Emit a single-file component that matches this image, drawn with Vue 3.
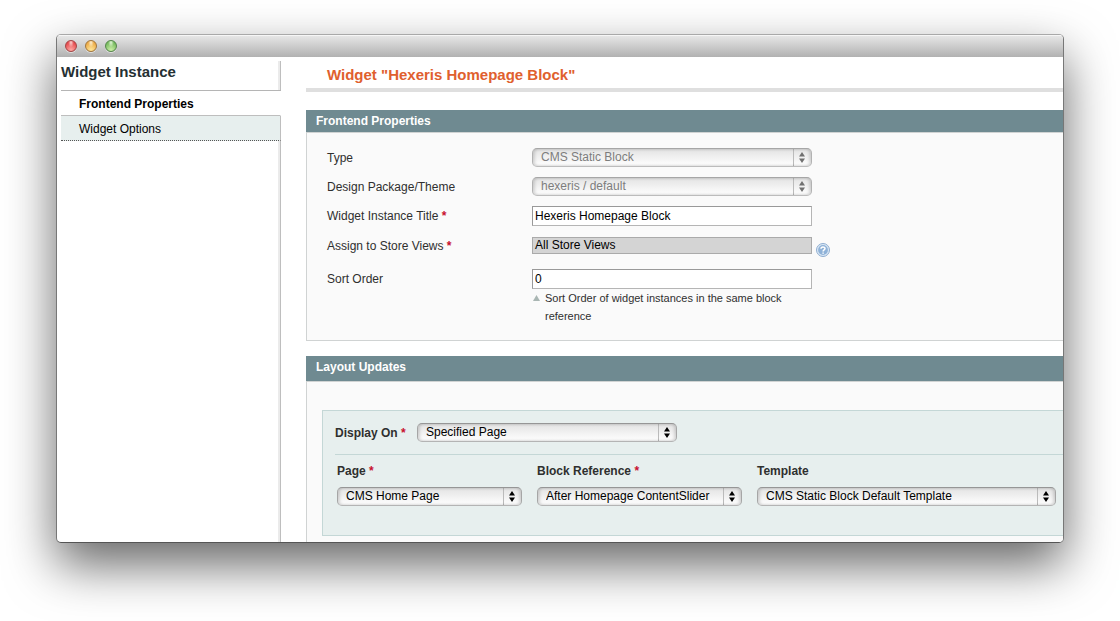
<script setup>
import { ref } from 'vue'

const type = ref('CMS Static Block')
const theme = ref('hexeris / default')
const title = ref('Hexeris Homepage Block')
const stores = ref(['All Store Views'])
const sortOrder = ref('0')
const displayOn = ref('Specified Page')

const columns = [
  { id: 'page', label: 'Page', required: true, value: 'CMS Home Page' },
  { id: 'block', label: 'Block Reference', required: true, value: 'After Homepage ContentSlider' },
  { id: 'template', label: 'Template', required: false, value: 'CMS Static Block Default Template' }
]
</script>

<template>
  <div class="desktop">
    <div class="window">
      <header class="titlebar">
        <button class="light red" type="button" aria-label="Close"></button>
        <button class="light amber" type="button" aria-label="Minimize"></button>
        <button class="light green" type="button" aria-label="Zoom"></button>
      </header>

      <div class="content">
        <aside class="sidebar">
          <h3>Widget Instance</h3>
          <nav>
            <a href="#frontend" class="tab active">Frontend Properties</a>
            <a href="#options" class="tab">Widget Options</a>
          </nav>
        </aside>

        <main class="main">
          <h1>Widget "Hexeris Homepage Block"</h1>

          <section id="frontend">
            <h2 class="head">Frontend Properties</h2>
            <div class="body fields">
              <label for="type">Type</label>
              <div class="pop disabled">
                <select id="type" v-model="type" disabled><option>CMS Static Block</option></select>
                <svg class="arrows" viewBox="0 0 6 11"><path d="M3 0 6 4.5H0zM3 11 6 6.5H0z" /></svg>
              </div>

              <label for="theme">Design Package/Theme</label>
              <div class="pop disabled">
                <select id="theme" v-model="theme" disabled><option>hexeris / default</option></select>
                <svg class="arrows" viewBox="0 0 6 11"><path d="M3 0 6 4.5H0zM3 11 6 6.5H0z" /></svg>
              </div>

              <label for="title">Widget Instance Title <em>*</em></label>
              <input id="title" v-model="title" type="text" />

              <label for="stores">Assign to Store Views <em>*</em></label>
              <div class="stores">
                <select id="stores" v-model="stores" multiple size="1"><option>All Store Views</option></select>
                <svg class="help" viewBox="0 0 14 14" role="img" aria-label="Help">
                  <circle cx="7" cy="7" r="6.5" fill="#dce9f5" stroke="#8fadd0" />
                  <circle cx="7" cy="7" r="4.9" fill="#8fb2d8" />
                  <path d="M5 5.7C5 3.3 9 3.3 9 5.6 9 7 7.1 6.9 7.1 8.4M7.1 9.4V10.7" fill="none" stroke="#fff" stroke-width="1.5" />
                </svg>
              </div>

              <label for="sort">Sort Order</label>
              <div>
                <input id="sort" v-model="sortOrder" type="text" />
                <p class="note">
                  <svg viewBox="0 0 7 6"><path d="M3.5 0 7 6H0z" /></svg>
                  <span>Sort Order of widget instances in the same block reference</span>
                </p>
              </div>
            </div>
          </section>

          <section id="layout">
            <h2 class="head tall">Layout Updates</h2>
            <div class="body updates">
              <div class="panel">
                <div class="display">
                  <label for="display">Display On <em>*</em></label>
                  <div class="pop">
                    <select id="display" v-model="displayOn"><option>Specified Page</option></select>
                    <svg class="arrows" viewBox="0 0 6 11"><path d="M3 0 6 4.5H0zM3 11 6 6.5H0z" /></svg>
                  </div>
                </div>
                <div class="columns">
                  <div v-for="c in columns" :key="c.id">
                    <label :for="c.id">{{ c.label }} <em v-if="c.required">*</em></label>
                    <div class="pop">
                      <select :id="c.id"><option>{{ c.value }}</option></select>
                      <svg class="arrows" viewBox="0 0 6 11"><path d="M3 0 6 4.5H0zM3 11 6 6.5H0z" /></svg>
                    </div>
                  </div>
                </div>
              </div>
            </div>
          </section>
        </main>
      </div>
    </div>
  </div>
</template>

<style>
body {
  background: #fff;
}
</style>

<style scoped>
* {
  box-sizing: border-box;
}
.desktop {
  padding: 34px 56px 78px;
  overflow: hidden;
  font: 12px/18px "Liberation Sans", Arial, sans-serif;
  color: #2f2f2f;
}
.window {
  border: 1px solid;
  border-color: #a9a9a9 #777 #555;
  border-radius: 5px;
  background: #fff;
  overflow: hidden;
  box-shadow: 0 22px 50px rgba(0, 0, 0, 0.6);
}
.titlebar {
  height: 22px;
  padding: 0 8px 2px;
  display: flex;
  align-items: center;
  gap: 8px;
  background: linear-gradient(#e6e6e6, #b1b1b1);
  border-top: 1px solid #f6f6f6;
}
.light {
  width: 12px;
  height: 12px;
  padding: 0;
  border: 1px solid;
  border-radius: 50%;
  box-shadow: 0 1px 0 rgba(255, 255, 255, 0.5);
}
.red {
  border-color: #a34545;
  background: radial-gradient(ellipse at 50% 15%, #fbd5d3, transparent 40%), radial-gradient(circle at 50% 90%, #ffaaa4, #e5484c 75%);
}
.amber {
  border-color: #a0753c;
  background: radial-gradient(ellipse at 50% 15%, #fdf0d4, transparent 40%), radial-gradient(circle at 50% 90%, #ffe79a, #eca944 75%);
}
.green {
  border-color: #54854a;
  background: radial-gradient(ellipse at 50% 15%, #e4f6da, transparent 40%), radial-gradient(circle at 50% 90%, #cdf0a8, #74b95c 75%);
}
.content {
  display: flex;
}
.sidebar {
  width: 220px;
  flex: none;
  margin: 4px 0 0 4px;
  background: linear-gradient(90deg, #ebebeb 2px, #bebebe 2px) right / 3px 100% no-repeat;
}
h1,
h2,
h3,
p {
  margin: 0;
}
h3 {
  height: 30px;
  font-size: 15px;
  line-height: 22px;
  color: #253033;
  border-bottom: 1px solid #b5b5b5;
}
.tab {
  display: block;
  height: 25px;
  padding-left: 18px;
  line-height: 26px;
  color: #000;
  text-decoration: none;
  background: #e7efee;
  border-right: 1px solid #bebebe;
  border-bottom: 1px dotted #555;
}
.tab.active {
  font-weight: bold;
  background: #fff;
  border-right-color: #fff;
  border-bottom: 1px solid #bebebe;
}
.main {
  flex: 1;
  min-width: 0;
  margin-left: 25px;
}
h1 {
  margin-bottom: 18px;
  padding: 6px 0 1px 21px;
  font-size: 15px;
  line-height: 24px;
  color: #e0602e;
  border-bottom: 4px solid #dfdfdf;
}
.head {
  height: 22px;
  padding-left: 10px;
  font-size: 12px;
  line-height: 22px;
  color: #fff;
  background: #6f8a91;
}
.head.tall {
  height: 25px;
}
.body {
  border: 1px solid #d0d3d3;
  border-right: 0;
  background: #fafafa;
}
.fields {
  display: grid;
  grid-template-columns: 205px 280px;
  gap: 10px 0;
  padding: 15px 20px;
  margin-bottom: 15px;
}
.fields label {
  padding-top: 1px;
}
em {
  font-style: normal;
  font-weight: bold;
  color: #c8102e;
}
.pop {
  position: relative;
  min-width: 0;
}
.pop select {
  display: block;
  width: 100%;
  height: 19px;
  padding: 0 24px 1px 8px;
  appearance: none;
  border: 1px solid;
  border-color: #969696 #a6a6a6 #b4b4b4;
  border-radius: 5px;
  background: linear-gradient(#bbb, #bbb) right 17px top / 1px 100% no-repeat, linear-gradient(#e3e3e3, #fff);
  box-shadow: inset 2px 0 3px rgba(0, 0, 0, 0.14), inset -2px 0 3px rgba(0, 0, 0, 0.14);
  font: inherit;
  line-height: 15px;
  color: #000;
  opacity: 1;
}
.pop.disabled select {
  color: #7d7d7d;
  border-color: #a6a6a6 #b2b2b2 #bcbcbc;
}
.arrows {
  position: absolute;
  right: 7px;
  top: 4px;
  width: 6px;
  height: 11px;
  pointer-events: none;
}
.disabled .arrows {
  fill: #707070;
}
input {
  display: block;
  width: 100%;
  height: 20px;
  padding: 0 2px;
  border: 1px solid;
  border-color: #999 #b5b5b5 #b5b5b5 #999;
  background: #fff;
  font: inherit;
  color: #000;
}
.stores {
  display: flex;
  align-items: flex-start;
  gap: 4px;
  height: 23px;
  padding-top: 1px;
}
.stores select {
  flex: 0 0 280px;
  height: 17px;
  padding: 0;
  appearance: none;
  border: 1px solid #aaa;
  border-radius: 0;
  background: #d4d4d4;
  font: inherit;
  overflow: hidden;
}
.stores option {
  padding: 0 2px;
  min-height: 15px;
  line-height: 15px;
  color: #000;
  background: linear-gradient(#d4d4d4, #d4d4d4);
}
.help {
  flex: none;
  width: 14px;
  height: 14px;
  margin-top: 6px;
}
.note {
  display: flex;
  gap: 5px;
  padding-left: 1px;
  font-size: 11px;
}
.note svg {
  flex: none;
  width: 7px;
  height: 6px;
  margin-top: 6px;
  fill: #a9b6b3;
}
.updates {
  padding: 28px 0 6px 15px;
  border-bottom: 0;
}
.panel {
  padding: 12px 0 29px 12px;
  background: #e7efee;
  border: 1px solid #c4d7d6;
  border-right: 0;
}
.panel label {
  font-weight: bold;
}
.display {
  display: flex;
  align-items: flex-start;
  padding-bottom: 11px;
  border-bottom: 1px solid #c4d7d6;
}
.display label {
  flex: 0 0 82px;
  line-height: 20px;
}
.display .pop {
  width: 260px;
}
.columns {
  display: grid;
  grid-template-columns: 185px 205px minmax(0, 1fr);
  gap: 15px;
  padding: 7px 7px 0 2px;
}
.columns label {
  display: block;
  margin-bottom: 7px;
}
</style>
